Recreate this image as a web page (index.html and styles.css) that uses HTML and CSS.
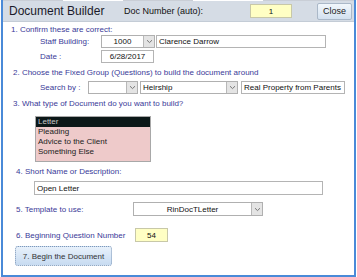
FILE: index.html
```html
<!DOCTYPE html>
<html>
<head>
<meta charset="utf-8">
<link rel="stylesheet" href="styles.css">
</head>
<body>
<div class="window">
  <div class="tabstrip"><span class="tab t2"></span><span class="tab t3"></span></div>
  <div class="header">
    <span class="title">Document Builder</span>
    <span class="docnum-label">Doc Number (auto):</span>
    <span class="field yellow docnum">1</span>
    <button class="close">Close</button>
  </div>
  <div class="content">
    <div class="step s1">1. Confirm these are correct:</div>
    <div class="row r-staff">
      <span class="label lab-staff">Staff Building:</span>
      <span class="select sel-staff"><span class="sel-text center">1000</span><span class="arrow"><svg width="7" height="5" viewBox="0 0 7 5"><path d="M1 1.2 L3.5 3.6 L6 1.2" fill="none" stroke="#777" stroke-width="1"/></svg></span></span>
      <span class="field staff-name">Clarence Darrow</span>
    </div>
    <div class="row r-date">
      <span class="label lab-date">Date :</span>
      <span class="field date center">6/28/2017</span>
    </div>
    <div class="step s2">2. Choose the Fixed Group (Questions) to build the document around</div>
    <div class="row r-search">
      <span class="label lab-search">Search by :</span>
      <span class="select sel-search"><span class="sel-text"></span><span class="arrow"><svg width="7" height="5" viewBox="0 0 7 5"><path d="M1 1.2 L3.5 3.6 L6 1.2" fill="none" stroke="#777" stroke-width="1"/></svg></span></span>
      <span class="select sel-heir"><span class="sel-text">Heirship</span><span class="arrow"><svg width="7" height="5" viewBox="0 0 7 5"><path d="M1 1.2 L3.5 3.6 L6 1.2" fill="none" stroke="#777" stroke-width="1"/></svg></span></span>
      <span class="field real">Real Property from Parents</span>
    </div>
    <div class="step s3">3. What type of Document do you want to build?</div>
    <div class="listbox">
      <div class="item selected">Letter</div>
      <div class="item">Pleading</div>
      <div class="item">Advice to the Client</div>
      <div class="item">Something Else</div>
    </div>
    <div class="step s4">4. Short Name or Description:</div>
    <div class="field shortname">Open Letter</div>
    <div class="row r-template">
      <span class="step s5">5. Template to use:</span>
      <span class="select sel-template"><span class="sel-text center">RinDocTLetter</span><span class="arrow"><svg width="7" height="5" viewBox="0 0 7 5"><path d="M1 1.2 L3.5 3.6 L6 1.2" fill="none" stroke="#777" stroke-width="1"/></svg></span></span>
    </div>
    <div class="row r-qnum">
      <span class="step s6">6. Beginning Question Number</span>
      <span class="field yellow qnum center">54</span>
    </div>
    <button class="begin">7. Begin the Document</button>
  </div>
</div>
</body>
</html>
```

FILE: styles.css
```css
* { box-sizing: border-box; }
html, body { margin: 0; padding: 0; background: #ffffff; }
body { font-family: "Liberation Sans", Arial, sans-serif; }

.window {
  width: 355px;
  height: 277px;
  margin-left: 1px;
  border-left: 2px solid #4a8ad8;
  border-right: 2px solid #4a8ad8;
  border-bottom: 2px solid #4a8ad8;
  background: #fff;
  display: flex;
  flex-direction: column;
}

.tabstrip {
  height: 1px;
  background: #c9ced6;
  display: flex;
}
.tab { height: 1px; background: #fff; }
.t2 { margin-left: 60px; width: 60px; }
.t3 { margin-left: 70px; width: 70px; }

.header {
  height: 21px;
  background: #d5dce5;
  display: flex;
  align-items: center;
  padding-left: 6px;
  border-bottom: 1px solid #c4ccd6;
}
.title {
  font-size: 12px;
  color: #1a1a2a;
  width: 115px;
}
.docnum-label {
  font-size: 9px;
  color: #111;
  width: 126px;
  white-space: nowrap;
}
.field {
  display: inline-flex;
  align-items: center;
  font-size: 8px;
  color: #111;
  background: #fff;
  border: 1px solid #b4b4b4;
  padding: 0 2px;
  height: 13px;
  white-space: nowrap;
}
.center { justify-content: center; }
.yellow { background: #ffffc4; border-color: #c8c8a8; }
.docnum {
  width: 42px;
  height: 14px;
  justify-content: center;
}
.close {
  margin-left: auto;
  margin-right: 2px;
  width: 35px;
  height: 17px;
  font-family: "Liberation Sans", Arial, sans-serif;
  font-size: 9px;
  color: #222;
  border: 1px solid #aab8c8;
  border-radius: 2px;
  background: linear-gradient(#f2f7fc, #d3e1ef);
  padding: 0;
}

.content {
  display: flex;
  flex-direction: column;
  align-items: flex-start;
}
.step, .label {
  font-size: 8px;
  color: #3a3a98;
  white-space: nowrap;
}
.s1 { margin: 3px 0 0 8px; }
.row { display: flex; align-items: center; }
.r-staff { margin-top: 1px; }
.lab-staff { margin-left: 37px; width: 61px; }
.select {
  display: inline-flex;
  align-items: stretch;
  height: 13px;
  border: 1px solid #b0b0b0;
  background: #fff;
  font-size: 8px;
  color: #111;
}
.sel-text {
  flex: 1;
  display: flex;
  align-items: center;
  padding: 0 2px;
  white-space: nowrap;
}
.arrow {
  width: 11px;
  border-left: 1px solid #b8b8b8;
  background: #e4e4e4;
  display: flex;
  align-items: center;
  justify-content: center;
}
.sel-staff { width: 54px; }
.staff-name { width: 170px; margin-left: 1px; }
.r-date { margin-top: 2px; }
.lab-date { margin-left: 37px; width: 61px; }
.date { width: 53px; }

.s2 { margin: 5px 0 0 10px; }
.r-search { margin-top: 4px; }
.lab-search { margin-left: 37px; width: 48px; }
.sel-search { width: 50px; }
.sel-heir { width: 98px; margin-left: 2px; }
.real { width: 104px; margin-left: 3px; }

.s3 { margin: 5px 0 0 10px; }
.listbox {
  margin: 8px 0 0 32px;
  width: 116px;
  height: 46px;
  border: 1px solid #a8a8a8;
  background: #eecaca;
  padding-top: 0;
}
.item {
  font-size: 8px;
  color: #222;
  height: 10px;
  line-height: 10px;
  padding-left: 2px;
}
.item.selected { background: #0c1818; color: #c8c8c8; }

.s4 { margin: 5px 0 0 13px; }
.shortname { margin: 5px 0 0 31px; width: 289px; height: 14px; }

.r-template { margin-top: 7px; }
.s5 { margin-left: 13px; width: 117px; }
.sel-template { width: 130px; height: 14px; }

.r-qnum { margin-top: 12px; }
.s6 { margin-left: 13px; width: 119px; }
.qnum { width: 33px; height: 14px; }

.begin {
  margin: 4px 0 0 12px;
  width: 97px;
  height: 20px;
  font-family: "Liberation Sans", Arial, sans-serif;
  font-size: 8px;
  color: #333;
  border: 1px dotted #7f98b8;
  border-radius: 3px;
  background: linear-gradient(#e8f1fb, #c7dbf1);
  padding: 0;
}
```
